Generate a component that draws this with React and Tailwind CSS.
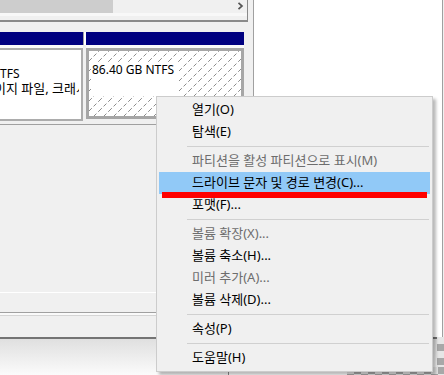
import React from "react";

const items = [
  { t: "열기(O)" },
  { t: "탐색(E)" },
  { sep: true },
  { t: "파티션을 활성 파티션으로 표시(M)", d: true },
  { t: "드라이브 문자 및 경로 변경(C)...", h: true },
  { t: "포맷(F)..." },
  { sep: true },
  { t: "볼륨 확장(X)...", d: true },
  { t: "볼륨 축소(H)..." },
  { t: "미러 추가(A)...", d: true },
  { t: "볼륨 삭제(D)..." },
  { sep: true },
  { t: "속성(P)" },
  { sep: true },
  { t: "도움말(H)" },
];

function Hatch() {
  return (
    <svg className="absolute inset-0 h-full w-full" aria-hidden="true">
      <defs>
        <pattern id="hatch" width="10" height="10" patternUnits="userSpaceOnUse">
          <path d="M0 10 L10 0" stroke="#8c8c8c" strokeWidth="1" strokeDasharray="4 2.5" fill="none" />
        </pattern>
      </defs>
      <rect width="100%" height="100%" fill="#ffffff" />
      <rect width="100%" height="100%" fill="url(#hatch)" />
    </svg>
  );
}

export default function App() {
  return (
    <div className="relative flex h-[375px] w-[444px] flex-col overflow-hidden bg-[#f0f0f0] font-['Noto_Sans','Noto_Sans_CJK_KR',sans-serif] text-[12px] text-black">
      {/* top section */}
      <div className="flex h-[337px]">
        {/* left pane */}
        <div className="flex w-[248px] flex-col">
          <div className="flex h-[22px] flex-col border-r border-b-2 border-[#8a8a8a]">
            <div className="flex h-[13px]">
              <div className="w-[113px] bg-[#cdcdcd]" />
              <div className="flex flex-1 items-start justify-end bg-[#f0f0f0] pr-[3px] pt-[2px]">
                <svg width="7" height="8" viewBox="0 0 7 8">
                  <path d="M1.5 0.8 L5 4 L1.5 7.2" stroke="#555555" strokeWidth="1.7" fill="none" />
                </svg>
              </div>
            </div>
            <div className="h-[3px] bg-[#f8f8f8]" />
            <div className="flex-1 bg-[#f0f0f0]" />
          </div>
          <div className="h-[10px]" />
          {/* disk row */}
          <div className="flex h-[92px] w-[244px]">
            {/* left partition */}
            <div className="flex w-[83px] flex-col">
              <div className="h-[13px] bg-[#000080]" />
              <div className="h-[3px] bg-[#fafafa]" />
              <div className="flex h-[73px] flex-col overflow-hidden border-y-2 border-r-2 border-[#acacac] bg-white pr-[2px]">
                <div className="mt-[16px] flex flex-col overflow-hidden leading-[15px] whitespace-nowrap">
                  <span className="ml-[-9px]">NTFS</span>
                  <span className="ml-[-18px] text-[13px]">페이지 파일, 크래시 덤프</span>
                </div>
              </div>
            </div>
            {/* gap */}
            <div className="flex w-[3px] flex-col">
              <div className="flex h-[13px]">
                <div className="w-px bg-[#a0a0a0]" />
                <div className="flex-1 bg-white" />
              </div>
            </div>
            {/* right partition */}
            <div className="flex w-[158px] flex-col">
              <div className="h-[13px] bg-[#000080]" />
              <div className="h-[3px] bg-[#fafafa]" />
              <div className="relative flex h-[71px] flex-col border-[3px] border-[#a6a6a6]">
                <Hatch />
                <div className="relative mt-[11px] ml-[2px] h-[34px] w-[88px] bg-white pl-[1px] leading-[16px]">
                  86.40 GB NTFS
                </div>
              </div>
            </div>
          </div>
          <div className="h-px bg-[#a0a0a0]" />
          <div className="h-[167px]" />
          <div className="h-px bg-white" />
          <div className="h-[19px]" />
          <div className="h-px bg-[#a0a0a0]" />
          <div className="h-[2px] bg-[#fafafa]" />
          <div className="h-px bg-[#d5d5d5]" />
          <div className="flex-1" />
        </div>
        {/* splitter */}
        <div className="w-[6px] border-r border-[#a0a0a0] bg-[#f0f0f0]" />
        {/* right panel */}
        <div className="mr-px flex-1 border-r border-[#a0a0a0] bg-white" />
      </div>
      {/* bottom section */}
      <div className="flex flex-1 flex-col bg-linear-to-b from-[#dedede] to-[#fbfbfb]">
        <div className="flex h-[30px]">
          <div className="flex-1">
            <div className="h-[2px] bg-[#747474]" />
          </div>
          <div className="w-[7px] bg-[conic-gradient(#a8a8a8_25%,#e6e6e6_0_50%,#a8a8a8_0_75%,#e6e6e6_0)] bg-[length:14px_14px]" />
        </div>
        <div className="flex flex-1">
          <div className="w-[228px]" />
          <div className="w-px bg-[#8a8a8a]" />
          <div className="w-[118px] bg-white" />
          <div className="flex-1 bg-[conic-gradient(#a8a8a8_25%,#e6e6e6_0_50%,#a8a8a8_0_75%,#e6e6e6_0)] bg-[length:14px_14px]" />
        </div>
      </div>

      {/* context menu */}
      <div className="absolute top-[96px] left-[156px] w-[277px] border border-[#cccccc] bg-[#f0f0f0] p-[2px] text-[13px] shadow-[3px_3px_3px_rgba(0,0,0,0.28)]">
        {items.map((it, i) =>
          it.sep ? (
            <div key={i} className="flex h-[7px] items-center">
              <div className="mr-px ml-[28px] h-px flex-1 bg-[#d0d0d0]" />
            </div>
          ) : (
            <div
              key={i}
              className={
                "flex h-[22px] items-center pl-[33px] whitespace-nowrap " +
                (it.h ? "bg-[#91c9f7] " : "") +
                (it.d ? "text-[#6d6d6d]" : "text-black")
              }
            >
              {it.t}
            </div>
          )
        )}
      </div>

      {/* red annotation underline */}
      <div className="absolute top-[192px] left-[162px] h-[6px] w-[265px] bg-[#ff0000]" />
    </div>
  );
}
